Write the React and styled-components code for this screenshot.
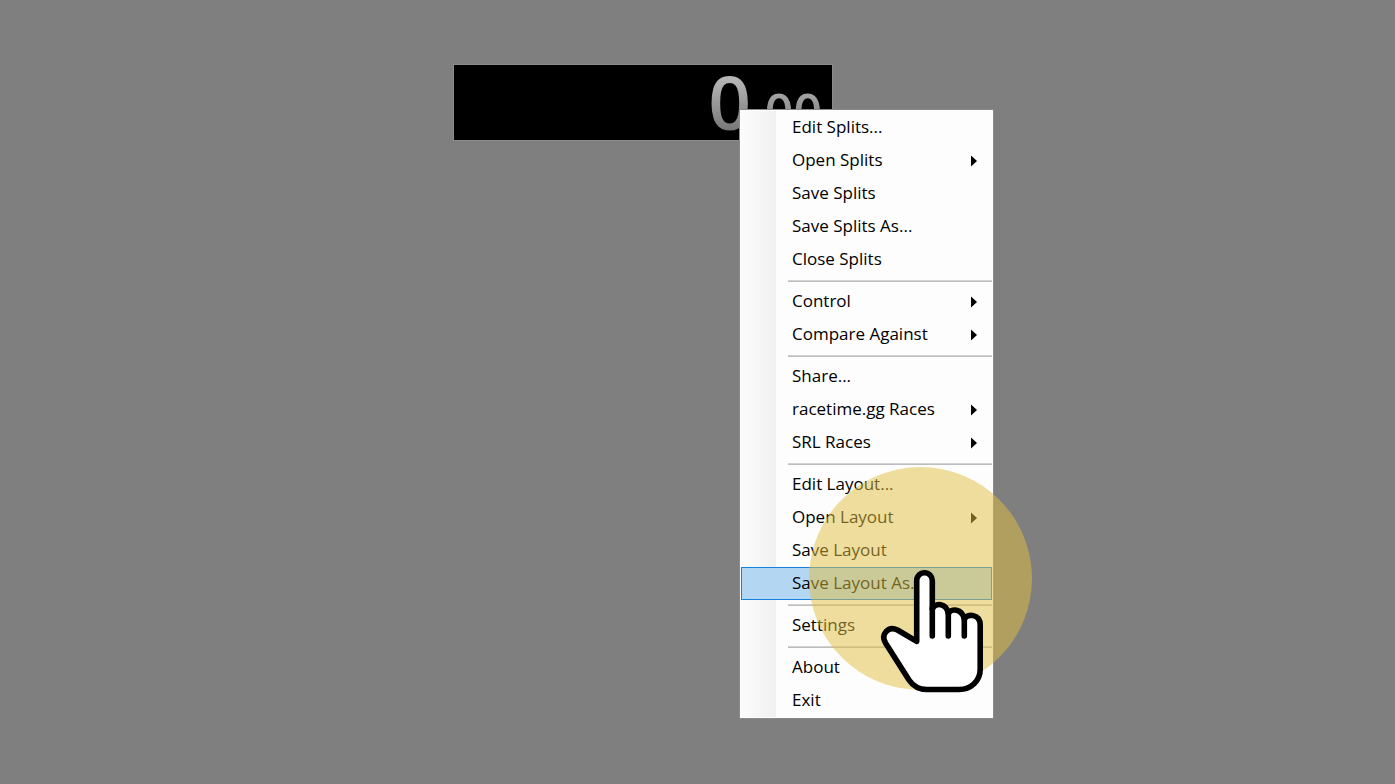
import React from "react";
import styled, { createGlobalStyle } from "styled-components";

const GlobalStyle = createGlobalStyle`
  * { box-sizing: border-box; }
  body { margin: 0; background: #7f7f7f; }
`;

const Desktop = styled.main`
  position: relative;
  min-height: 100vh;
  padding: 64px 0 0 453px;
  overflow: hidden;
  background: #7f7f7f;
  font-family: "Open Sans", "Noto Sans", sans-serif;
`;

const TimerWindow = styled.section`
  width: 380px;
  height: 77px;
  padding: 8px 10px 0 0;
  display: flex;
  justify-content: flex-end;
  align-items: center;
  background: #000;
  border: 1px solid #8c8c8c;
`;

const Time = styled.output`
  font-size: 75px;
  line-height: 75px;
  font-weight: 600;
  color: transparent;
  background: linear-gradient(#bcbcbc 10px, #787878 66px);
  background-clip: text;
`;

const Fraction = styled.span`
  font-size: 50px;
`;

const Menu = styled.menu`
  position: absolute;
  left: 739px;
  top: 109px;
  width: 255px;
  margin: 0;
  padding: 1px;
  list-style: none;
  border: 1px solid #8a8a8a;
  background: linear-gradient(90deg, #fcfcfc, #f0f0f0) 0 1px / 36px calc(100% - 2px) no-repeat #fdfdfd;
`;

const Entry = styled.li`
  display: block;
`;

const Item = styled.button`
  display: flex;
  align-items: center;
  justify-content: space-between;
  width: 100%;
  height: 33px;
  margin: 0;
  padding: 0 14px 0 50px;
  border: 1px solid ${(p) => (p.$active ? "#1482dc" : "transparent")};
  background: ${(p) => (p.$active ? "#b3d7f3" : "transparent")};
  color: #000;
  font-family: inherit;
  font-size: 17px;
  line-height: 24px;
  text-align: left;
  white-space: nowrap;
`;

const Label = styled.span`
  padding-bottom: 2px;
`;

const Arrow = styled.svg`
  flex: none;
  width: 6px;
  height: 12px;
`;

const Divider = styled.li`
  height: 9px;
  padding: 4px 0 0 47px;
  &::before {
    content: "";
    display: block;
    height: 2px;
    background: linear-gradient(#d2d2d2 50%, #bdbdbd 50%);
  }
`;

const Highlight = styled.div`
  position: absolute;
  left: 809px;
  top: 467px;
  width: 223px;
  height: 223px;
  border-radius: 50%;
  background: rgba(223, 190, 64, 0.51);
  pointer-events: none;
`;

const Hand = styled.svg`
  position: absolute;
  left: 870px;
  top: 560px;
  width: 125px;
  height: 140px;
  pointer-events: none;
`;

const groups = [
  [["Edit Splits..."], ["Open Splits", true], ["Save Splits"], ["Save Splits As..."], ["Close Splits"]],
  [["Control", true], ["Compare Against", true]],
  [["Share..."], ["racetime.gg Races", true], ["SRL Races", true]],
  [["Edit Layout..."], ["Open Layout", true], ["Save Layout"], ["Save Layout As..."]],
  [["Settings"]],
  [["About"], ["Exit"]],
];

export default function App() {
  return (
    <Desktop>
      <GlobalStyle />
      <TimerWindow>
        <Time>0<Fraction>.00</Fraction></Time>
      </TimerWindow>
      <Menu>
        {groups.map((items, index) => (
          <React.Fragment key={index}>
            {index > 0 && <Divider role="separator" />}
            {items.map(([label, submenu]) => (
              <Entry key={label}>
                <Item type="button" $active={label === "Save Layout As..."} aria-haspopup={submenu ? "menu" : undefined}>
                  <Label>{label}</Label>
                  {submenu && (
                    <Arrow viewBox="0 0 6 12" aria-hidden="true">
                      <path d="M0 0.5L6 6L0 11.5Z" />
                    </Arrow>
                  )}
                </Item>
              </Entry>
            ))}
          </React.Fragment>
        ))}
      </Menu>
      <Highlight />
      <Hand viewBox="0 0 125 140" fill="none" stroke="#000" strokeWidth="5.6" strokeLinecap="round" strokeLinejoin="round" aria-hidden="true">
        <path
          fill="#fff"
          d="M46.7 81.3V20.5a7.8 7.8 0 0 1 15.6 0V49C65 42.500 76.500 42.500 78.300 53.500C81 48 92 48.500 94.300 59C97 53.500 110.200 53.500 110.200 65V109C110.200 121 101 129.500 89 129.500H57C49 129.500 43 126 39 120L15.500 83C10.500 74.500 18 65.500 27.500 70Z"
        />
        <path d="M62.300 48V76M78.300 53V76M94.300 58V76" />
      </Hand>
    </Desktop>
  );
}
